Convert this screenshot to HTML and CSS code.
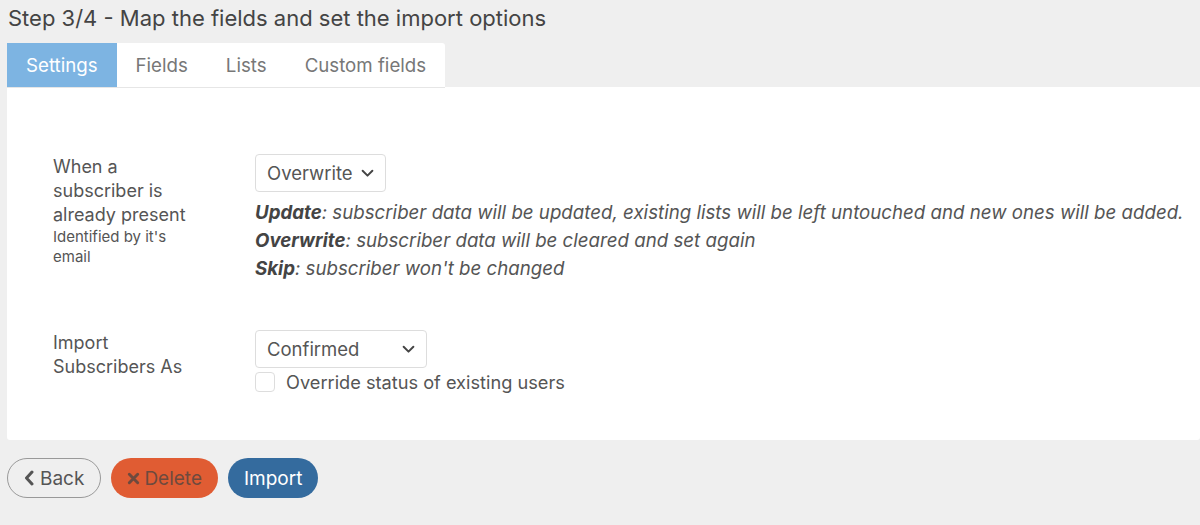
FILE: index.html
```html
<!DOCTYPE html>
<html lang="en">
<head>
    <meta charset="UTF-8">
    <title>Import subscribers</title>
    <meta name="viewport" content="width=device-width, initial-scale=1.0">
    <link rel="stylesheet" href="styles.css">
</head>
<body>
    <h2 class="step-title">Step 3/4 - Map the fields and set the import options</h2>
    <div class="tabs">
        <a class="tab active" href="#">Settings</a>
        <a class="tab" href="#">Fields</a>
        <a class="tab" href="#">Lists</a>
        <a class="tab" href="#">Custom fields</a>
    </div>
    <div class="panel">
        <div class="row">
            <div class="label">
                When a subscriber is already present
                <small>Identified by it's email</small>
            </div>
            <div class="control">
                <div class="select select-mode">
                    <span>Overwrite</span>
                    <svg class="chevron" viewBox="0 0 12 8" width="13" height="9"><path d="M1.5 1.5 6 6l4.5-4.5" fill="none" stroke="#444" stroke-width="1.8" stroke-linecap="round" stroke-linejoin="round"/></svg>
                </div>
                <div class="help">
                    <p><b>Update</b>: subscriber data will be updated, existing lists will be left untouched and new ones will be added.</p>
                    <p><b>Overwrite</b>: subscriber data will be cleared and set again</p>
                    <p><b>Skip</b>: subscriber won't be changed</p>
                </div>
            </div>
        </div>
        <div class="row">
            <div class="label">Import Subscribers As</div>
            <div class="control">
                <div class="select select-status">
                    <span>Confirmed</span>
                    <svg class="chevron" viewBox="0 0 12 8" width="13" height="9"><path d="M1.5 1.5 6 6l4.5-4.5" fill="none" stroke="#444" stroke-width="1.8" stroke-linecap="round" stroke-linejoin="round"/></svg>
                </div>
                <label class="check"><span class="box"></span> Override status of existing users</label>
            </div>
        </div>
    </div>
    <div class="actions">
        <button class="btn btn-back">
            <svg viewBox="0 0 10 16" width="10" height="16"><path d="M8 2 2.5 8 8 14" fill="none" stroke="#555" stroke-width="3" stroke-linecap="round" stroke-linejoin="round"/></svg>
            Back
        </button>
        <button class="btn btn-delete">
            <svg viewBox="0 0 14 14" width="13" height="13"><path d="M2.5 2.5l9 9M11.5 2.5l-9 9" fill="none" stroke="#6e4a3e" stroke-width="3.2" stroke-linecap="round"/></svg>
            Delete
        </button>
        <button class="btn btn-import">Import</button>
    </div>
</body>
</html>
```

FILE: styles.css
```css
body { margin: 0; padding: 0 0 0 7px; background: #efefef; font-family: Inter, "Noto Sans", sans-serif; color: #555; }
.step-title { margin: 0; padding: 5px 0 0 1px; height: 43px; box-sizing: border-box; font-size: 22px; font-weight: 400; color: #444; }

.tabs { display: inline-flex; background: #fff; border-radius: 3px 3px 0 0; border-bottom: 1px solid #e6e6e6; }
.tab { display: block; padding: 0 19px; height: 44px; line-height: 45px; font-size: 18.7px; color: #777; text-decoration: none; }
.tab.active { background: #7db4e2; color: #fff; }

.panel { background: #fff; border-radius: 0 0 3px 3px; padding: 67px 0 0 46px; height: 353px; box-sizing: border-box; margin-top: -1px; }
.row { display: flex; margin-bottom: 47px; }
.label { width: 202px; flex-shrink: 0; padding-right: 56px; padding-top: 1px; box-sizing: border-box; font-size: 18px; line-height: 24px; }
.label small { display: block; font-size: 15px; line-height: 20px; }

.control { display: flex; flex-direction: column; align-items: flex-start; }
.select { display: inline-flex; align-items: center; justify-content: space-between; height: 38px; box-sizing: border-box; border: 1px solid #ddd; border-radius: 4px; padding: 0 11px 0 11px; font-size: 18.5px; color: #555; }
.select-mode { width: 131px; }
.select-status { width: 172px; }
.help { margin-top: 7px; font-size: 18.7px; font-style: italic; line-height: 28px; color: #555; white-space: nowrap; }
.help p { margin: 0; }
.help b { font-weight: 700; color: #444; }

.check { display: flex; align-items: center; gap: 11px; margin-top: 4px; font-size: 18.2px; line-height: 20px; color: #555; }
.check .box { width: 20px; height: 20px; border: 1px solid #ddd; border-radius: 4px; box-sizing: border-box; }

.actions { display: flex; gap: 10px; padding-top: 18px; }
.btn { display: inline-flex; align-items: center; gap: 6px; height: 40px; border-radius: 20px; padding: 0 15px; font-family: inherit; font-size: 19px; border: 1px solid transparent; }
.btn-back { background: transparent; border-color: #999; color: #555; padding: 0 16px; }
.btn-delete { background: #e05c33; color: #6e4a3e; gap: 4px; }
.btn-import { background: #346b9e; color: #fff; }
```
